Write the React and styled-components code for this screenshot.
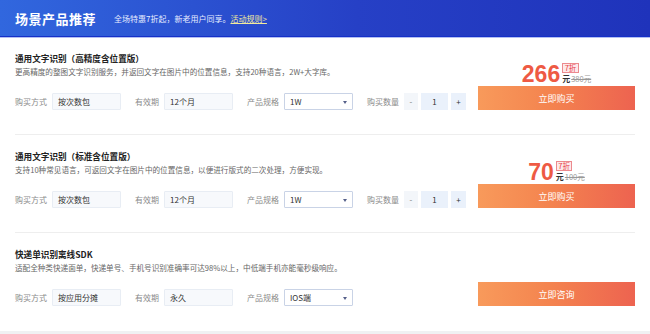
import React from "react";
import styled, { createGlobalStyle } from "styled-components";

const GlobalStyle = createGlobalStyle`
  html, body {
    margin: 0;
    padding: 0;
    background: #ffffff;
    font-family: "Noto Sans CJK SC", "Noto Sans", sans-serif;
  }
  * { box-sizing: border-box; }
`;

const Page = styled.div`
  width: 650px;
  min-height: 334px;
  display: flex;
  flex-direction: column;
`;

const Header = styled.div`
  height: 37px;
  display: flex;
  align-items: center;
  padding-left: 15px;
  background: linear-gradient(90deg, #3167de 0%, #2640c6 55%, #1f33bb 100%);
  border-bottom: 1px solid #1530c8;
  box-shadow: 0 1px 0 #b3bff2;
  position: relative;
  z-index: 1;
`;

const HeaderTitle = styled.div`
  color: #ffffff;
  font-size: 13px;
  font-weight: 700;
  letter-spacing: 0.5px;
`;

const HeaderSub = styled.div`
  margin-left: 18px;
  color: #e6ecff;
  font-size: 8px;
  line-height: 1;
  padding-top: 1px;

  a {
    color: #f3eb9c;
    text-decoration: underline;
  }
`;

const List = styled.div`
  padding: 0 15px;
  flex: 1;
`;

const Item = styled.div`
  display: flex;
  align-items: flex-end;
  padding: 14px 0 ${(p) => (p.last ? 25 : 24)}px;
  border-bottom: ${(p) => (p.last ? "none" : "1px solid #eeeeee")};
`;

const Info = styled.div`
  flex: 1;
  min-width: 0;
`;

const Title = styled.div`
  font-size: 8.6px;
  line-height: 14px;
  font-weight: 700;
  color: #222222;
`;

const Desc = styled.div`
  font-size: 7.6px;
  line-height: 14px;
  color: #666666;
  white-space: nowrap;
`;

const Row = styled.div`
  display: flex;
  align-items: center;
  margin-top: 14px;
  gap: 14px;
`;

const Field = styled.div`
  display: flex;
  align-items: center;
`;

const Label = styled.span`
  font-size: 8px;
  color: #8a8a8a;
  margin-right: 5px;
  white-space: nowrap;
`;

const Box = styled.div`
  width: 69px;
  height: 17px;
  display: flex;
  align-items: center;
  padding: 0 5px;
  font-size: 8px;
  color: #333333;
  background: ${(p) => (p.select ? "#ffffff" : "#f7f9fc")};
  border: 1px solid ${(p) => (p.select ? "#c9d3e6" : "#e8edf4")};
  border-radius: 1px;
  position: relative;
`;

const Arrow = styled.span`
  position: absolute;
  right: 5px;
  top: 7px;
  width: 0;
  height: 0;
  border-left: 2.5px solid transparent;
  border-right: 2.5px solid transparent;
  border-top: 3px solid #56608a;
`;

const Counter = styled.div`
  display: flex;
  gap: 3px;
`;

const CountCell = styled.div`
  width: ${(p) => p.w}px;
  height: 17px;
  display: flex;
  align-items: center;
  justify-content: center;
  font-size: 8px;
  color: ${(p) => (p.value ? "#333333" : "#777777")};
  background: ${(p) => (p.value ? "#eaf1fb" : "#f3f6fa")};
`;

const Side = styled.div`
  width: 157px;
  display: flex;
  flex-direction: column;
  align-items: center;
`;

const Price = styled.div`
  display: flex;
  align-items: flex-end;
  margin-bottom: 3px;
`;

const Amount = styled.span`
  font-family: "Liberation Sans", Arial, sans-serif;
  font-size: 23px;
  font-weight: 700;
  line-height: 18px;
  color: #ee5a44;
`;

const PriceMeta = styled.div`
  display: flex;
  flex-direction: column;
  align-items: flex-start;
  margin-left: 2px;
`;

const Badge = styled.span`
  font-size: 7.5px;
  line-height: 8px;
  color: #e8454a;
  background: #fde9ea;
  border: 1px solid #ec8a8e;
  padding: 0 1.5px;
  margin-bottom: 1px;
`;

const Unit = styled.div`
  display: flex;
  align-items: baseline;
  font-size: 8px;
  line-height: 9px;

  b {
    color: #333333;
    font-weight: 700;
    margin-right: 1px;
  }

  s {
    color: #999999;
    font-size: 7.5px;
  }
`;

const Button = styled.div`
  width: 100%;
  height: 24px;
  display: flex;
  align-items: center;
  justify-content: center;
  color: #ffffff;
  font-size: 9px;
  background: linear-gradient(90deg, #f89a5b 0%, #f4844f 45%, #ed6350 100%);
`;

const Footer = styled.div`
  height: 10px;
  background: #f0f1f3;
`;

const products = [
  {
    title: "通用文字识别（高精度含位置版）",
    desc: "更高精度的整图文字识别服务，并返回文字在图片中的位置信息，支持20种语言，2W+大字库。",
    way: "按次数包",
    period: "12个月",
    spec: "1W",
    price: "266",
    origin: "380元",
    action: "立即购买",
  },
  {
    title: "通用文字识别（标准含位置版）",
    desc: "支持10种常见语言，可返回文字在图片中的位置信息，以便进行版式的二次处理，方便实现。",
    way: "按次数包",
    period: "12个月",
    spec: "1W",
    price: "70",
    origin: "100元",
    action: "立即购买",
  },
  {
    title: "快递单识别离线SDK",
    desc: "适配全种类快递面单，快递单号、手机号识别准确率可达98%以上，中低端手机亦能毫秒级响应。",
    way: "按应用分摊",
    period: "永久",
    spec: "IOS端",
    action: "立即咨询",
  },
];

export default function App() {
  return (
    <Page>
      <GlobalStyle />
      <Header>
        <HeaderTitle>场景产品推荐</HeaderTitle>
        <HeaderSub>
          全场特惠7折起，新老用户同享。<a>活动规则&gt;</a>
        </HeaderSub>
      </Header>
      <List>
        {products.map((p, i) => (
          <Item key={p.title} last={i === products.length - 1}>
            <Info>
              <Title>{p.title}</Title>
              <Desc>{p.desc}</Desc>
              <Row>
                <Field>
                  <Label>购买方式</Label>
                  <Box>{p.way}</Box>
                </Field>
                <Field>
                  <Label>有效期</Label>
                  <Box>{p.period}</Box>
                </Field>
                <Field>
                  <Label>产品规格</Label>
                  <Box select>
                    {p.spec}
                    <Arrow />
                  </Box>
                </Field>
                {p.price && (
                  <Field>
                    <Label>购买数量</Label>
                    <Counter>
                      <CountCell w={14}>-</CountCell>
                      <CountCell w={27} value>
                        1
                      </CountCell>
                      <CountCell w={15} value>
                        +
                      </CountCell>
                    </Counter>
                  </Field>
                )}
              </Row>
            </Info>
            <Side>
              {p.price && (
                <Price>
                  <Amount>{p.price}</Amount>
                  <PriceMeta>
                    <Badge>7折</Badge>
                    <Unit>
                      <b>元</b>
                      <s>{p.origin}</s>
                    </Unit>
                  </PriceMeta>
                </Price>
              )}
              <Button>{p.action}</Button>
            </Side>
          </Item>
        ))}
      </List>
      <Footer />
    </Page>
  );
}
